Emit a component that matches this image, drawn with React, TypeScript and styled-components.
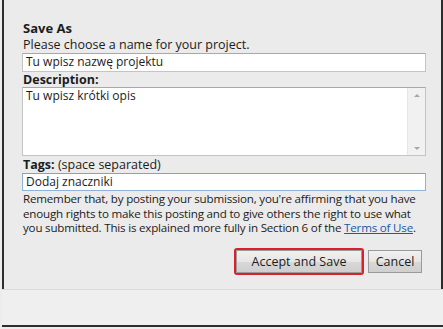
import styled, { createGlobalStyle } from "styled-components";

const GlobalStyle = createGlobalStyle`
  html, body {
    margin: 0;
    padding: 0;
    background: #ffffff;
  }
  body {
    font-family: "Open Sans", "Noto Sans", sans-serif;
    color: #1c1c1c;
  }
`;

const Page = styled.div`
  width: 443px;
  height: 329px;
  display: flex;
  flex-direction: column;
  background: #ececec;
  overflow: hidden;
`;

const Dialog = styled.div`
  height: 289px;
  box-sizing: border-box;
  margin-left: 2px;
  border-left: 2px solid #2e2e2e;
  border-right: 2px solid #2e2e2e;
  background: #ebebeb;
  padding: 20px 15px 0 18px;
  display: flex;
  flex-direction: column;
`;

const Footer = styled.div`
  height: 38px;
  box-sizing: border-box;
  border-top: 1px solid #dadada;
  border-bottom: 2px solid #2e2e2e;
  margin-left: 2px;
  background: #efefef;
`;

const Title = styled.div`
  font-size: 13px;
  font-weight: 700;
  line-height: 16px;
  padding-left: 1px;
`;

const Label = styled.div<{ $height: number }>`
  font-size: 12.5px;
  line-height: ${({ $height }) => $height}px;
  padding-left: 1px;
  white-space: nowrap;
`;

const Strong = styled.b`
  font-weight: 700;
`;

const Field = styled.div<{ $height: number; $focus?: boolean }>`
  height: ${({ $height }) => $height}px;
  box-sizing: border-box;
  background: #ffffff;
  border: 1px solid ${({ $focus }) => ($focus ? "#8fb2d8" : "#c4c4c4")};
  border-top-color: ${({ $focus }) => ($focus ? "#7ea3cf" : "#a8a8a8")};
  font-size: 12px;
  line-height: 16px;
  padding: 0 3px;
  white-space: nowrap;
`;

const TextArea = styled.div`
  height: 69px;
  box-sizing: border-box;
  background: #ffffff;
  border: 1px solid #c4c4c4;
  border-top-color: #a8a8a8;
  display: flex;
  font-size: 12px;
  line-height: 16px;
`;

const AreaText = styled.div`
  flex: 1;
  padding: 0 3px;
`;

const Scrollbar = styled.div`
  width: 17px;
  background: #f1f1f1;
  border-left: 1px solid #e6e6e6;
  display: flex;
  flex-direction: column;
  justify-content: space-between;
  align-items: center;
  padding: 6px 0 5px;
`;

const Arrow = styled.div<{ $down?: boolean }>`
  width: 0;
  height: 0;
  border-left: 3px solid transparent;
  border-right: 3px solid transparent;
  ${({ $down }) =>
    $down ? "border-top: 3px solid #a6a6a6;" : "border-bottom: 3px solid #a6a6a6;"}
`;

const Notice = styled.p`
  margin: 1px 0 0;
  font-size: 11.6px;
  letter-spacing: -0.2px;
  line-height: 14.5px;
  padding-left: 1px;
  white-space: nowrap;
`;

const Link = styled.a`
  color: #2057a8;
  text-decoration: underline;
`;

const Buttons = styled.div`
  display: flex;
  justify-content: flex-end;
  align-items: center;
  gap: 4px;
  margin-top: 12px;
  padding-right: 4px;
`;

const Highlight = styled.div`
  border: 2px solid #d9212b;
  border-radius: 3px;
  padding: 0;
`;

const Button = styled.div<{ $width: number }>`
  width: ${({ $width }) => $width}px;
  height: 23px;
  box-sizing: border-box;
  border: 1px solid #9a9a9a;
  background: linear-gradient(#f0f0f0 0%, #e6e6e6 50%, #d8d8d8 51%, #cfcfcf 100%);
  font-size: 12.5px;
  line-height: 21px;
  text-align: center;
`;

export default function App() {
  return (
    <>
      <GlobalStyle />
      <Page>
        <Dialog>
          <Title>Save As</Title>
          <Label $height={17}>Please choose a name for your project.</Label>
          <Field $height={19}>Tu wpisz nazwę projektu</Field>
          <Label $height={15}>
            <Strong>Description:</Strong>
          </Label>
          <TextArea>
            <AreaText>Tu wpisz krótki opis</AreaText>
            <Scrollbar>
              <Arrow />
              <Arrow $down />
            </Scrollbar>
          </TextArea>
          <Label $height={17}>
            <Strong>Tags:</Strong> (space separated)
          </Label>
          <Field $height={18} $focus>
            Dodaj znaczniki
          </Field>
          <Notice>
            Remember that, by posting your submission, you're affirming that you have
            <br />
            enough rights to make this posting and to give others the right to use what
            <br />
            you submitted. This is explained more fully in Section 6 of the{" "}
            <Link>Terms of Use</Link>.
          </Notice>
          <Buttons>
            <Highlight>
              <Button $width={126}>Accept and Save</Button>
            </Highlight>
            <Button $width={54}>Cancel</Button>
          </Buttons>
        </Dialog>
        <Footer />
      </Page>
    </>
  );
}
